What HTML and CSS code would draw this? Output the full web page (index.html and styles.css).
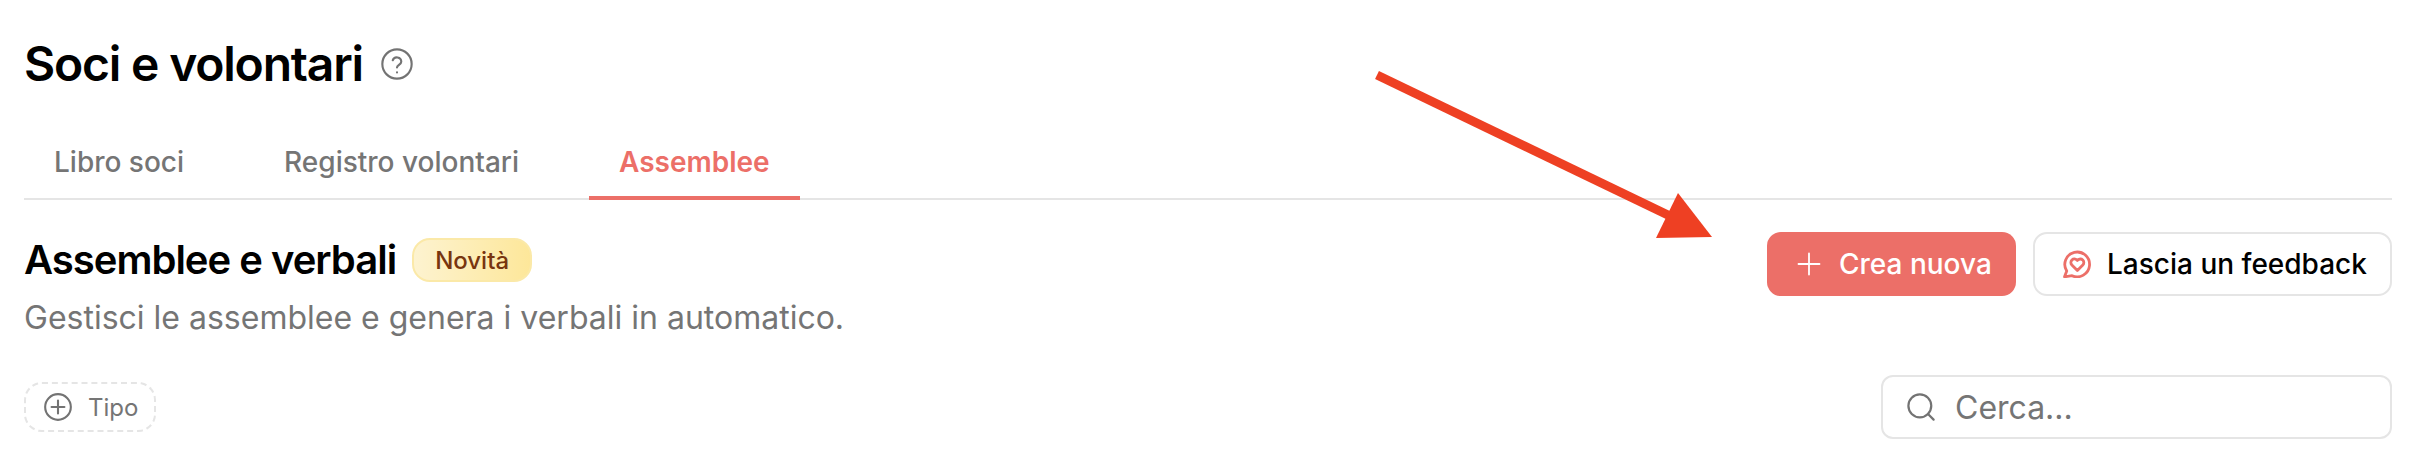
FILE: index.html
```html
<!DOCTYPE html>
<html lang="it">
<head>
<meta charset="utf-8">
<title>Soci e volontari</title>
<link rel="stylesheet" href="styles.css">
</head>
<body>
<main class="page">
  <header class="title-row">
    <h1 class="title">Soci e volontari</h1>
    <svg class="help" viewBox="0 0 24 24" fill="none" stroke="#737373" stroke-width="1.6" stroke-linecap="round" stroke-linejoin="round"><circle cx="12" cy="12" r="11"/><path d="M8.800 9.200a3.300 3.300 0 0 1 6.400 1.100c0 2.100-3.200 2.600-3.200 4.300"/><path d="M12 18.300h.01"/></svg>
  </header>
  <nav class="tabs">
    <a class="tab">Libro soci</a>
    <a class="tab">Registro volontari</a>
    <a class="tab active">Assemblee</a>
  </nav>
  <section class="head">
    <div class="head-text">
      <div class="head-title">
        <h2 class="subtitle">Assemblee e verbali</h2>
        <span class="badge">Novità</span>
      </div>
      <p class="desc">Gestisci le assemblee e genera i verbali in automatico.</p>
    </div>
    <div class="actions">
      <button class="btn primary">
        <svg class="btn-icon" viewBox="0 0 24 24" fill="none" stroke="#fff" stroke-width="1.8" stroke-linecap="round"><path d="M12 1.500v21M1.500 12h21"/></svg>
        Crea nuova
      </button>
      <button class="btn outline">
        <svg class="btn-icon" viewBox="0 0 24 24" fill="none" stroke="#ec6f68" stroke-width="2.4" stroke-linejoin="round" stroke-linecap="round"><path d="M1.300 23l1.900-5A10.600 10.600 0 1 1 7.800 22z"/><path d="M12.300 17.500l-4.700-4.700a3 3 0 0 1 4.300-4.200l.4.400.4-.4a3 3 0 0 1 4.300 4.200z"/></svg>
        Lascia un feedback
      </button>
    </div>
  </section>
  <section class="filters">
    <button class="chip">
      <svg class="chip-icon" viewBox="0 0 24 24" fill="none" stroke="#737373" stroke-width="1.8" stroke-linecap="round"><circle cx="12" cy="12" r="11"/><path d="M12 6.500v11M6.500 12h11"/></svg>
      Tipo
    </button>
    <div class="search">
      <svg class="search-icon" viewBox="0 0 24 24" fill="none" stroke="#737373" stroke-width="1.900" stroke-linecap="round"><circle cx="11" cy="11" r="9.800"/><path d="M18 18l4.800 4.800"/></svg>
      <span class="placeholder">Cerca...</span>
    </div>
  </section>
</main>
<svg class="arrow" viewBox="0 0 2418 470" aria-hidden="true">
  <path d="M1377 75L1670 216" stroke="#ee4023" stroke-width="9" fill="none"/>
  <path d="M1678 193L1712 237L1656 238Z" fill="#ee4023"/>
</svg>
</body>
</html>
```
FILE: styles.css
```css
* { box-sizing: border-box; }
html, body { margin: 0; height: 470px; overflow: hidden; background: #fff; }
body { font-family: Inter, "Liberation Sans", sans-serif; color: #000; position: relative; }
.page { padding: 40px 26px 0 24px; }
.title-row { display: flex; align-items: center; gap: 18px; height: 48px; }
.title { margin: 0; font-size: 48px; font-weight: 600; letter-spacing: -1.2px; line-height: 48px; }
.help { width: 32px; height: 32px; }
.tabs { display: flex; margin-top: 26px; border-bottom: 2px solid #e5e5e5; height: 86px; gap: 40px; }
.tab { display: flex; align-items: center; justify-content: center; padding: 14px 30px 0; font-size: 28px; font-weight: 500; color: #757575; height: 86px; border-bottom: 4px solid transparent; }
.tab.active { color: #ec6f68; font-weight: 600; border-bottom-color: #ec6f68; }
.head { display: flex; justify-content: space-between; align-items: flex-start; padding-top: 32px; }
.head-text { display: flex; flex-direction: column; gap: 17px; }
.head-title { display: flex; align-items: center; gap: 16px; margin-top: 6px; }
.subtitle { margin: 0; font-size: 40px; font-weight: 600; letter-spacing: -1px; line-height: 44px; }
.badge { display: flex; align-items: center; height: 44px; padding: 0 21px; border-radius: 18px; border: 2px solid #fbe9a8; background: linear-gradient(90deg, #fdf3d0, #fde79a); color: #78350f; font-size: 24px; font-weight: 500; }
.desc { margin: 0; font-size: 32px; line-height: 38px; color: #757575; }
.actions { display: flex; gap: 17px; }
.btn { display: flex; align-items: center; height: 64px; border-radius: 14px; font: 500 28px Inter, sans-serif; cursor: pointer; white-space: nowrap; }
.primary { width: 249px; padding: 0 0 0 30px; gap: 18px; border: 0; background: #ec6f68; color: #fff; }
.outline { width: 359px; padding: 0 0 0 28px; gap: 16px; border: 2px solid #e5e5e5; background: #fff; color: #000; }
.btn-icon { width: 24px; height: 24px; flex: none; }
.outline .btn-icon { width: 28px; height: 28px; }
.filters { display: flex; justify-content: space-between; align-items: center; margin-top: 38px; }
.chip { display: flex; align-items: center; gap: 16px; width: 132px; height: 50px; padding: 0 18px; border: 2px dashed #e5e5e5; border-radius: 18px; background: #fff; color: #757575; font: 400 24px Inter, sans-serif; }
.chip-icon { width: 28px; height: 28px; flex: none; }
.search { display: flex; align-items: center; gap: 20px; width: 511px; height: 64px; padding: 0 24px; border: 2px solid #e5e5e5; border-radius: 12px; }
.search-icon { width: 28px; height: 28px; flex: none; }
.placeholder { font-size: 32px; color: #757575; }
.arrow { position: absolute; left: 0; top: 0; width: 2418px; height: 470px; pointer-events: none; }
```
